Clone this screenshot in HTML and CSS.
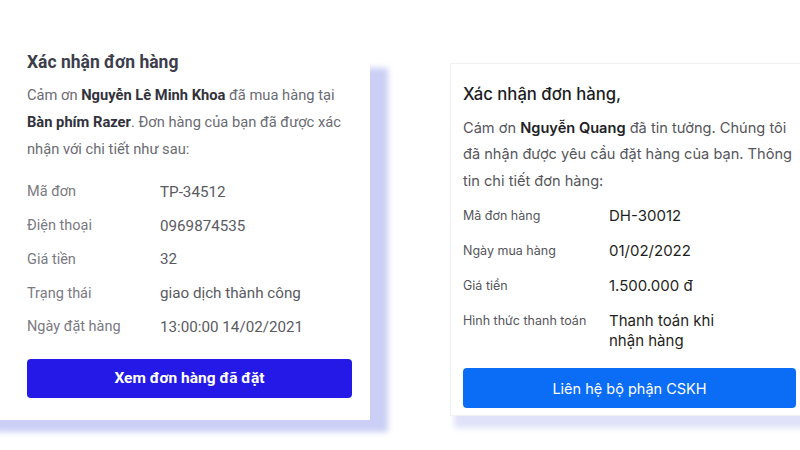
FILE: index.html
```html
<!DOCTYPE html>
<html lang="vi">
<head>
<meta charset="utf-8">
<title>Xác nhận đơn hàng</title>
<link rel="stylesheet" href="styles.css">
</head>
<body>
<main class="page">
  <section class="card card-a">
    <h2 class="a-title">Xác nhận đơn hàng</h2>
    <p class="a-text">Cảm ơn <b>Nguyễn Lê Minh Khoa</b> đã mua hàng tại <b>Bàn phím Razer</b>. Đơn hàng của bạn đã được xác nhận với chi tiết như sau:</p>
    <div class="a-rows">
      <div class="a-row"><span class="a-label">Mã đơn</span><span class="a-value">TP-34512</span></div>
      <div class="a-row"><span class="a-label">Điện thoại</span><span class="a-value">0969874535</span></div>
      <div class="a-row"><span class="a-label">Giá tiền</span><span class="a-value">32</span></div>
      <div class="a-row"><span class="a-label">Trạng thái</span><span class="a-value">giao dịch thành công</span></div>
      <div class="a-row"><span class="a-label">Ngày đặt hàng</span><span class="a-value">13:00:00 14/02/2021</span></div>
    </div>
    <button class="a-btn">Xem đơn hàng đã đặt</button>
  </section>
  <section class="card card-b">
    <h2 class="b-title">Xác nhận đơn hàng,</h2>
    <p class="b-text">Cám ơn <b>Nguyễn Quang</b> đã tin tưởng. Chúng tôi đã nhận được yêu cầu đặt hàng của bạn. Thông tin chi tiết đơn hàng:</p>
    <div class="b-rows">
      <span class="b-label">Mã đơn hàng</span><span class="b-value">DH-30012</span>
      <span class="b-label">Ngày mua hàng</span><span class="b-value">01/02/2022</span>
      <span class="b-label">Giá tiền</span><span class="b-value">1.500.000 đ</span>
      <span class="b-label">Hình thức thanh toán</span><span class="b-value">Thanh toán khi<br>nhận hàng</span>
    </div>
    <button class="b-btn">Liên hệ bộ phận CSKH</button>
  </section>
</main>
</body>
</html>
```
FILE: styles.css
```css
html, body {
  margin: 0;
  padding: 0;
  background: #ffffff;
  overflow: hidden;
  width: 800px;
  height: 450px;
}
.page {
  display: flex;
  align-items: flex-start;
  gap: 80px;
}
.card {
  background: #ffffff;
  box-sizing: border-box;
  display: flex;
  flex-direction: column;
}
h2, p { margin: 0; }
button {
  border: none;
  cursor: pointer;
}

/* Card A */
.card-a {
  margin-top: 40px;
  margin-left: -40px;
  width: 410px;
  flex: none;
  padding: 11px 18px 22px 67px;
  font-family: Roboto, "Liberation Sans", sans-serif;
  box-shadow: 26px 20px 6px -8px #cbcff5;
}
.a-title {
  font-size: 17.5px;
  line-height: 22px;
  font-weight: 700;
  color: #3d3d4c;
}
.a-text {
  margin-top: 8.5px;
  font-size: 14.7px;
  line-height: 27px;
  color: #6b6b73;
}
.a-text b { color: #32323c; font-weight: 700; }
.a-rows {
  margin-top: 12.5px;
  display: flex;
  flex-direction: column;
}
.a-row {
  display: flex;
  height: 33.75px;
  align-items: center;
}
.a-label {
  width: 133px;
  flex: none;
  font-size: 14.5px;
  color: #7a7a82;
}
.a-value {
  font-size: 15.2px;
  color: #5a5a62;
}
.a-btn {
  margin-top: 15px;
  height: 39px;
  width: 100%;
  background: #2419e6;
  border-radius: 4px;
  color: #ffffff;
  font-family: Roboto, "Liberation Sans", sans-serif;
  font-weight: 700;
  font-size: 15.5px;
}

/* Card B */
.card-b {
  margin-top: 63px;
  width: 370px;
  flex: none;
  border: 1px solid #f1f1f3;
  padding: 19px 25px 7px 12px;
  font-family: Inter, "Noto Sans", sans-serif;
  box-shadow: 4px 12px 6px #dfe2f8;
}
.b-title {
  font-size: 16.7px;
  line-height: 22px;
  font-weight: 500;
  color: #1c1c1f;
}
.b-text {
  margin-top: 9.75px;
  font-size: 14.6px;
  line-height: 26.5px;
  color: #56565c;
}
.b-text b { color: #222226; font-weight: 600; }
.b-rows {
  margin-top: 12px;
  display: grid;
  grid-template-columns: 146px 1fr;
  row-gap: 15px;
  align-items: start;
}
.b-label {
  font-size: 12.5px;
  line-height: 19px;
  color: #55555b;
}
.b-value {
  font-size: 15px;
  line-height: 20px;
  color: #1f1f22;
}
.b-btn {
  margin-top: 17px;
  height: 40px;
  width: 333px;
  background: #0b6cf6;
  border-radius: 4px;
  color: #ffffff;
  font-family: Inter, "Noto Sans", sans-serif;
  font-size: 14.5px;
  font-weight: 400;
}
```
